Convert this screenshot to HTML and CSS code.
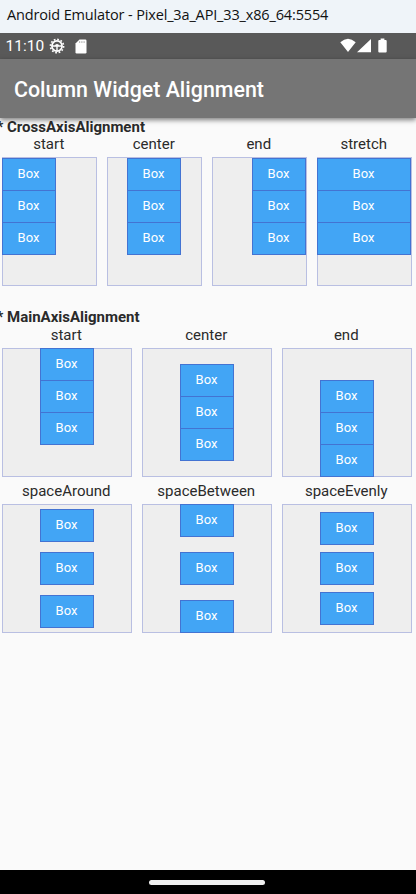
FILE: index.html
```html
<!DOCTYPE html>
<html lang="en">
<head>
<meta charset="utf-8">
<title>Column Widget Alignment</title>
<link rel="stylesheet" href="styles.css">
</head>
<body>
<div class="window-title"><span>Android Emulator - Pixel_3a_API_33_x86_64:5554</span></div>
<div class="status-bar">
  <span class="clock">11:10</span>
  <svg class="gear" viewBox="0 0 16 16" width="16" height="16"><circle cx="8" cy="8" r="6.600" fill="none" stroke="#fff" stroke-width="1.6" stroke-dasharray="1.728 1.728"/><circle cx="8" cy="8" r="5.1" fill="none" stroke="#fff" stroke-width="1.700"/><path d="M3 8h10M8 8v5" stroke="#fff" stroke-width="1.4"/><path d="M6 8a2 2 0 0 1 4 0z" fill="#fff"/></svg>
  <svg class="sd" viewBox="0 0 12 15" width="12" height="15"><path d="M4.500 .5H10.300q1.200 0 1.200 1.200V13.300q0 1.200-1.200 1.200H1.700q-1.200 0-1.200-1.200V4.500z" fill="#fff"/><path d="M4.700 2.300v1.500M6.900 2.300v1.500M9.100 2.300v1.500" stroke="#999" stroke-width="1"/></svg>
  <svg class="signals" viewBox="0 0 48 16" width="48" height="16"><path d="M.3 4.300Q8-2.700 15.700 4.300L8 14zM17 14.300 31 1v13.300zM38.300 3q0-1 1-1h1.300V.6h3.800V2h1.300q1 0 1 1v10.500q0 1-1 1h-6.400q-1 0-1-1z" fill="#fff"/></svg>
</div>
<header class="app-bar">Column Widget Alignment</header>
<main class="content">
  <section>
    <h2>* CrossAxisAlignment</h2>
    <div class="row">
      <div class="cell"><p>start</p><div class="panel inset cross-start"><i>Box</i><i>Box</i><i>Box</i></div></div>
      <div class="cell"><p>center</p><div class="panel inset"><i>Box</i><i>Box</i><i>Box</i></div></div>
      <div class="cell"><p>end</p><div class="panel inset cross-end"><i>Box</i><i>Box</i><i>Box</i></div></div>
      <div class="cell"><p>stretch</p><div class="panel inset cross-stretch"><i>Box</i><i>Box</i><i>Box</i></div></div>
    </div>
  </section>
  <section class="main-axis">
    <h2>* MainAxisAlignment</h2>
    <div class="row">
      <div class="cell"><p>start</p><div class="panel main-start"><i>Box</i><i>Box</i><i>Box</i></div></div>
      <div class="cell"><p>center</p><div class="panel main-center"><i>Box</i><i>Box</i><i>Box</i></div></div>
      <div class="cell"><p>end</p><div class="panel main-end"><i>Box</i><i>Box</i><i>Box</i></div></div>
    </div>
    <div class="row last">
      <div class="cell"><p>spaceAround</p><div class="panel around"><i>Box</i><i>Box</i><i>Box</i></div></div>
      <div class="cell"><p>spaceBetween</p><div class="panel between"><i>Box</i><i>Box</i><i>Box</i></div></div>
      <div class="cell"><p>spaceEvenly</p><div class="panel evenly"><i>Box</i><i>Box</i><i>Box</i></div></div>
    </div>
  </section>
</main>
<footer class="nav-bar"><span></span></footer>
</body>
</html>
```
FILE: styles.css
```css
* { box-sizing: border-box; }
body { margin: 0; width: 416px; height: 894px; display: flex; flex-direction: column; overflow: hidden; background: #fafafa; color: #2a2a2a; font-family: Roboto, sans-serif; }
.window-title { flex: none; height: 33px; padding-left: 7px; background: #eff4f9; color: #111; font: 14.5px/30px "Open Sans", sans-serif; white-space: nowrap; letter-spacing: -.15px; }
.status-bar { flex: none; height: 26px; display: flex; align-items: center; padding: 0 28px 0 5.5px; background: #595959; color: #fff; }
.clock { width: 43.5px; font-size: 15.5px; line-height: 26px; }
.sd { margin-left: 10px; }
.signals { margin-left: auto; }
.app-bar { flex: none; height: 59px; padding-left: 14px; background: #757575; color: #fff; font-size: 21.4px; font-weight: 500; line-height: 62px; box-shadow: 0 2px 5px rgba(0,0,0,.5); position: relative; white-space: nowrap; }
.content { flex: 1; }
h2 { margin: 0 0 0 -3.5px; padding-top: 1px; height: 18px; font-size: 15px; line-height: 17px; font-weight: 700; }
.row { display: flex; gap: 10px; padding: 0 4px 0 2px; }
.cell { flex: 1; min-width: 0; }
p { margin: 0; padding-right: 1.5px; height: 21px; font-size: 15px; line-height: 17px; text-align: center; }
.panel { height: 129px; display: flex; flex-direction: column; align-items: center; padding-bottom: 1px; background: #eee; box-shadow: inset 0 0 0 1px #b9bfe2; }
.inset { padding: 1px 1px 0 0; }
.panel i { flex: none; width: 54px; height: 33px; margin-bottom: -1px; padding-right: 1px; border: 1px solid #4373d2; background: #42a5f5; color: #fff; font-size: 13px; font-style: normal; line-height: 30px; text-align: center; }
.cross-start { align-items: flex-start; }
.cross-end { align-items: flex-end; }
.cross-stretch { align-items: stretch; }
.cross-stretch i { width: auto; }
.main-axis { margin-top: 23px; }
.main-axis h2 { padding-top: 0; }
.last { margin-top: 6px; }
.main-center { justify-content: center; }
.main-end { justify-content: flex-end; }
.around { justify-content: space-around; }
.between { justify-content: space-between; }
.evenly { justify-content: space-evenly; }
.nav-bar { flex: none; height: 24px; display: flex; justify-content: center; padding: 10px 3px 0 0; background: #000; }
.nav-bar span { width: 116px; height: 5px; border-radius: 3px; background: #f0f0f0; }
```
